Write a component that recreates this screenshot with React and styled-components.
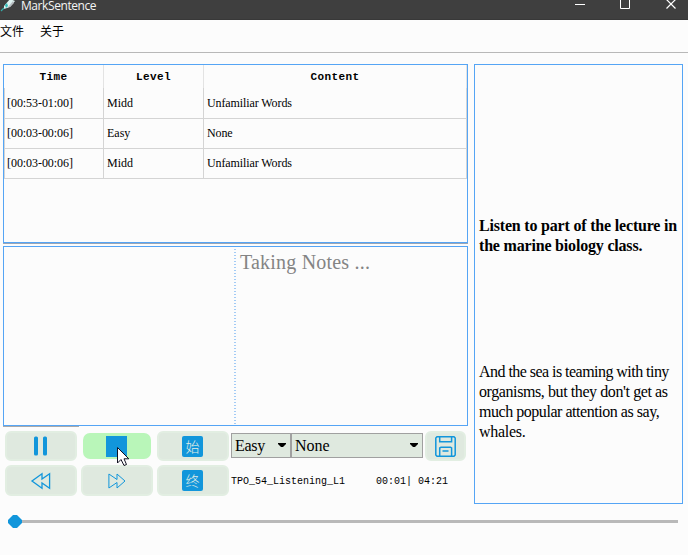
import React from 'react';
import styled, { createGlobalStyle } from 'styled-components';

const blue = '#55a5f5';
const accent = '#1296db';

const GlobalStyle = createGlobalStyle`
  * { box-sizing: border-box; }
  body { margin: 0; background: #fcfcfc; overflow: hidden; }
`;

const Window = styled.div`
  width: 688px;
  height: 555px;
  overflow: hidden;
  display: flex;
  flex-direction: column;
  background: #fcfcfc;
  color: #000;
  font-family: 'Liberation Serif', 'Noto Sans CJK SC', serif;
`;

const TitleBar = styled.header`
  height: 20px;
  flex: none;
  display: flex;
  background: #3f3f3f;
  border-bottom: 1px solid #383838;
  color: #f5f5f5;
`;

const Title = styled.span`
  flex: 1;
  margin-left: 5px;
  font: 12px/11px 'Open Sans', sans-serif;
  letter-spacing: -0.42px;
`;

const MenuBar = styled.nav`
  height: 33px;
  flex: none;
  display: flex;
  gap: 16px;
  border-bottom: 1px solid #b8b8b8;
  font: 12px/21px 'Noto Sans CJK SC', sans-serif;
`;

const Main = styled.main`
  flex: none;
  display: grid;
  grid-template-columns: 465px 209px;
  column-gap: 6px;
  padding: 11px 0 0 3px;
`;

const LeftColumn = styled.div`
  display: flex;
  flex-direction: column;
`;

const TablePanel = styled.section`
  height: 179px;
  border: 1px solid ${blue};
  box-shadow: 0 1px 0 #9ba6b5;
`;

const Table = styled.div`
  width: 463px;
`;

const Row = styled.div`
  display: grid;
  grid-template-columns: 100px 100px 263px;
  height: ${(p) => (p.$head ? 23 : 30)}px;
`;

const HeadCell = styled.div`
  border-right: 1px solid #e3e3e3;
  text-align: center;
  font: bold 11px/25px 'Liberation Mono', monospace;
  letter-spacing: 0.4px;
`;

const Cell = styled.div`
  border-right: 1px solid #d4d4d4;
  border-bottom: 1px solid #d4d4d4;
  padding-left: 3px;
  font-size: 12px;
  line-height: 30px;
  letter-spacing: ${(p) => p.$spacing || 0}px;

  &:first-child { border-left: 1px solid #d4d4d4; padding-left: 2px; }
`;

const NotesPanel = styled.section`
  height: 180px;
  margin-top: 3px;
  border: 1px solid ${blue};
  display: grid;
  grid-template-columns: 230px 1fr;
  position: relative;

  &::after {
    content: '';
    position: absolute;
    left: -1px;
    bottom: -2px;
    width: 76px;
    height: 1px;
    background: #a9a9a9;
  }
`;

const NotesInput = styled.div`
  position: relative;
  padding-left: 6px;
  color: #848484;
  font-size: 20px;
  line-height: 31px;
  letter-spacing: 0.2px;

  &::before {
    content: '';
    position: absolute;
    left: 0;
    top: 2px;
    bottom: 0;
    width: 2px;
    background: repeating-linear-gradient(#a3cbf5 0 1px, transparent 1px 3px);
  }
`;

const Transcript = styled.aside`
  height: 440px;
  border: 1px solid ${blue};
  padding: 151px 0 0 4px;
  font-size: 16px;
  line-height: 20px;
  white-space: nowrap;
`;

const Heading = styled.p`
  margin: 0 0 106px;
  font-weight: bold;
  letter-spacing: -0.19px;
`;

const Sentence = styled.p`
  margin: 0;
`;

const Line = styled.span`
  display: block;
  letter-spacing: ${(p) => p.$spacing}px;
`;

const Controls = styled.div`
  display: grid;
  grid-template-columns: 72px 72px 72px 236px;
  grid-template-rows: 30px 31px;
  gap: 4px;
  padding: 5px 0 0 2px;
`;

const Button = styled.button`
  width: ${(p) => p.$width || 72}px;
  height: 100%;
  flex: none;
  display: flex;
  align-items: center;
  justify-content: center;
  padding: 0;
  border: 2px solid #e2eee2;
  border-radius: 6px;
  background: #dfe9df;

  svg { display: block; overflow: visible; }
`;

const StopButton = styled(Button)`
  width: 68px;
  height: 26px;
  margin: 2px;
  border: 0;
  border-radius: 7px;
  background: #b9f6b9;
  position: relative;
`;

const StopIcon = styled.span`
  width: 21px;
  height: 21px;
  margin-left: -1px;
  background: ${accent};
`;

const Cursor = styled.svg`
  position: absolute;
  left: 34px;
  top: 14px;
`;

const Glyph = styled.span`
  width: 21px;
  height: 21px;
  margin-left: -1px;
  border-radius: 2px;
  background: ${accent};
  color: #e4eee5;
  font: 300 14px/21px 'Noto Sans CJK SC', sans-serif;
  text-align: center;
`;

const Selectors = styled.div`
  display: flex;
  align-items: center;
  margin-left: -2px;
`;

const Combo = styled.div`
  width: ${(p) => p.$width}px;
  height: 25px;
  margin-top: -1px;
  margin-right: ${(p) => p.$gap || 0}px;
  display: flex;
  align-items: center;
  justify-content: space-between;
  padding: 1px 4px 0 3px;
  border: 1px solid #a0a0a0;
  background: #dfe9df;
  font-size: 16px;
  letter-spacing: ${(p) => p.$spacing || 0}px;

  svg { margin-top: -2px; }
`;

const Status = styled.div`
  display: flex;
  gap: 31px;
  margin-left: -2px;
  font: 10px/34px 'Liberation Mono', monospace;
  white-space: pre;
`;

const Slider = styled.div`
  margin: 11px 10px 0 8px;
  height: 13px;
  flex: none;
  display: flex;
  align-items: center;
`;

const Thumb = styled.svg`
  flex: none;
  display: block;
`;

const Track = styled.div`
  flex: 1;
  height: 3px;
  background: #b9b9b9;
`;

const rows = [
  ['[00:53-01:00]', 'Midd', 'Unfamiliar Words'],
  ['[00:03-00:06]', 'Easy', 'None'],
  ['[00:03-00:06]', 'Midd', 'Unfamiliar Words'],
];

function PenIcon() {
  return (
    <svg width="16" height="12" viewBox="0 0 16 12">
      <path d="M4 6 L10 -1 L15 1 L10 7 L4 9Z" fill="#dff3f1" />
      <path d="M5 5 L7 3 L8 6 L6 8Z" fill="#35bdb9" />
      <path d="M8 7 L13 1 L14 3 L10 7Z" fill="#b7bcc0" />
      <path d="M1 11 L4 8" stroke="#36aaa9" strokeWidth="1.3" />
    </svg>
  );
}

function WindowButtons() {
  return (
    <svg width="116" height="19" fill="none" stroke="#fff">
      <path d="M3 4.5H13M48.5 -2V8.5H57.5V-2" />
      <path d="M94.5 -.5L103.5 8.5M103.5 -.5L94.5 8.5" strokeWidth="1.2" />
    </svg>
  );
}

function PauseIcon() {
  return (
    <svg width="14" height="20" fill={accent}>
      <rect x="0" y=".5" width="4" height="19" rx="1.5" />
      <rect x="9" y=".5" width="4" height="19" rx="1.5" />
    </svg>
  );
}

function SkipIcon({ forward }) {
  return forward ? (
    <svg width="18" height="16" fill="none" stroke={accent} strokeWidth="1">
      <path d="M.9 1L9 6.500V1L17 8L9 15V9.500L.9 15Z" />
    </svg>
  ) : (
    <svg width="20" height="16" fill="none" stroke={accent} strokeWidth="1.3">
      <path d="M18.600 .8L11 6V.8L1 8L11 15.200V10L18.600 15.200Z" />
    </svg>
  );
}

function SaveIcon() {
  return (
    <svg width="21" height="21" fill="none" stroke={accent} strokeWidth="1.5">
      <path d="M2 .8H19L20.200 2V19L19 20.200H2L.8 19V2Z" />
      <path d="M4.700 1V5.800H16.600V1M4.700 20V12L6 11.200H15.500L16.600 12V20M7.500 15H13.500" />
    </svg>
  );
}

function Arrow() {
  return (
    <svg width="8" height="4" viewBox="0 0 8 4">
      <path d="M0 0H8V1L5 4H3L0 1Z" fill="#000" />
    </svg>
  );
}

export default function App() {
  return (
    <>
      <GlobalStyle />
      <Window>
        <TitleBar>
          <PenIcon />
          <Title>MarkSentence</Title>
          <WindowButtons />
        </TitleBar>
        <MenuBar>
          <span>文件</span>
          <span>关于</span>
        </MenuBar>
        <Main>
          <LeftColumn>
            <TablePanel>
              <Table>
                <Row $head>
                  <HeadCell>Time</HeadCell>
                  <HeadCell>Level</HeadCell>
                  <HeadCell>Content</HeadCell>
                </Row>
                {rows.map(([time, level, content], i) => (
                  <Row key={i}>
                    <Cell $spacing={-0.06}>{time}</Cell>
                    <Cell>{level}</Cell>
                    <Cell $spacing={-0.1}>{content}</Cell>
                  </Row>
                ))}
              </Table>
            </TablePanel>
            <NotesPanel>
              <div />
              <NotesInput>Taking Notes ...</NotesInput>
            </NotesPanel>
            <Controls>
              <Button><PauseIcon /></Button>
              <StopButton>
                <StopIcon />
                <Cursor width="13" height="20" viewBox="0 0 13 20">
                  <path d="M.5 .5V16L4 12.500L7 18.500L9.500 17.500L7 11.800H11.800Z" fill="#fff" stroke="#101020" />
                </Cursor>
              </StopButton>
              <Button><Glyph>始</Glyph></Button>
              <Selectors>
                <Combo $width={60} $spacing={-0.3}>Easy<Arrow /></Combo>
                <Combo $width={132} $gap={2}>None<Arrow /></Combo>
                <Button $width={41}><SaveIcon /></Button>
              </Selectors>
              <Button><SkipIcon /></Button>
              <Button><SkipIcon forward /></Button>
              <Button><Glyph>终</Glyph></Button>
              <Status>
                <span>TPO_54_Listening_L1</span>
                <span>00:01| 04:21</span>
              </Status>
            </Controls>
          </LeftColumn>
          <Transcript>
            <Heading>Listen to part of the lecture in<br />the marine biology class.</Heading>
            <Sentence>
              <Line $spacing={-0.54}>And the sea is teaming with tiny </Line>
              <Line $spacing={-0.41}>organisms, but they don't get as </Line>
              <Line $spacing={-0.46}>much popular attention as say, </Line>
              <Line $spacing={-0.3}>whales.</Line>
            </Sentence>
          </Transcript>
        </Main>
        <Slider>
          <Thumb width="14" height="13" viewBox="0 0 14 13">
            <path d="M5 0H9L14 5V8L9 13H5L0 8V5Z" fill={accent} />
          </Thumb>
          <Track />
        </Slider>
      </Window>
    </>
  );
}
